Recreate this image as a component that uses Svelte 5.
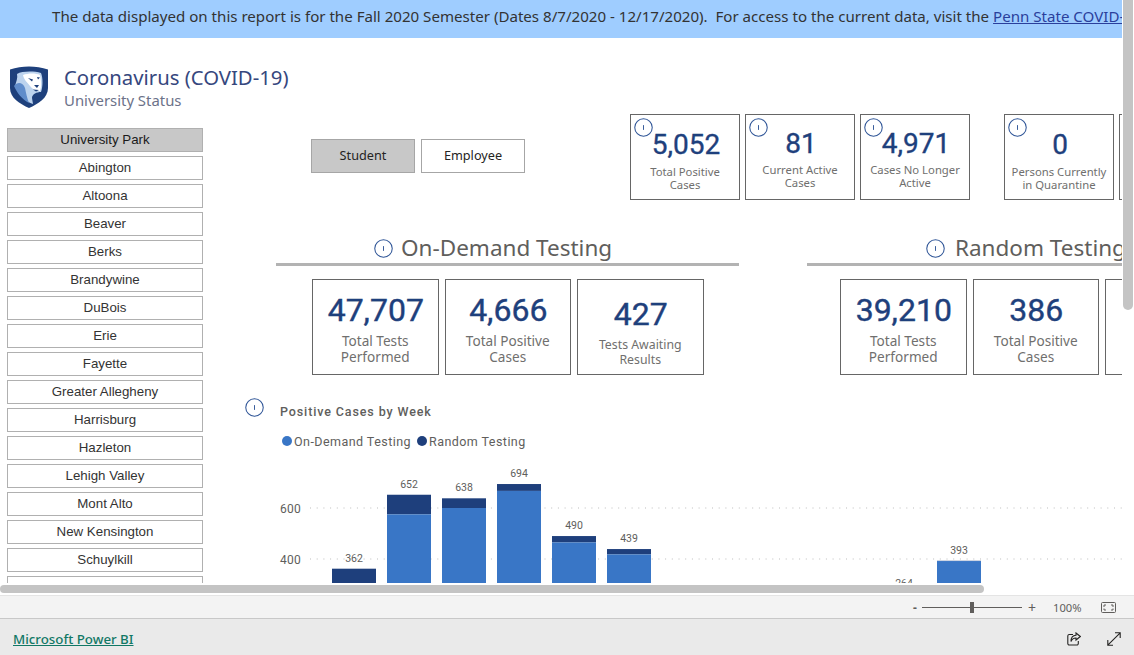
<script>
  const campuses = ['University Park', 'Abington', 'Altoona', 'Beaver', 'Berks', 'Brandywine', 'DuBois', 'Erie', 'Fayette', 'Greater Allegheny', 'Harrisburg', 'Hazleton', 'Lehigh Valley', 'Mont Alto', 'New Kensington', 'Schuylkill', 'Shenango']

  const kpis = [
    { value: '5,052', label: ['Total Positive', 'Cases'] },
    { value: '81', label: ['Current Active', 'Cases'], tight: true },
    { value: '4,971', label: ['Cases No Longer', 'Active'], tight: true },
    { value: '0', label: ['Persons Currently', 'in Quarantine'], gap: true },
    { value: '', label: [] }
  ]

  const onDemand = [
    { value: '47,707', label: ['Total Tests', 'Performed'] },
    { value: '4,666', label: ['Total Positive', 'Cases'] },
    { value: '427', label: ['Tests Awaiting', 'Results'], small: true }
  ]

  const random = [
    { value: '39,210', label: ['Total Tests', 'Performed'] },
    { value: '386', label: ['Total Positive', 'Cases'] },
    { value: '', label: [] }
  ]

  // total per week, demand = on-demand part of it
  const weeks = [
    { total: 362, demand: 280 },
    { total: 652, demand: 575 },
    { total: 638, demand: 600 },
    { total: 694, demand: 667 },
    { total: 490, demand: 465 },
    { total: 439, demand: 418 },
    { total: 180, demand: 150 },
    { total: 120, demand: 100 },
    { total: 90, demand: 70 },
    { total: 110, demand: 90 },
    { total: 264, demand: 240 },
    { total: 393, demand: 392 }
  ]

  const y = (v) => 49 + (600 - v) * 0.255
  const barX = (i) => 87 + i * 55
</script>

{#snippet info(size = 19)}
  <svg class="info" width={size} height={size} viewBox="0 0 20 20">
    <circle cx="10" cy="10" r="9.2" fill="#fff" stroke="#2f5597" stroke-width="1.1" />
    <path d="M10 7.500v5" stroke="#2f5597" stroke-width="1" />
  </svg>
{/snippet}

<div class="app">
  <div class="report">
    <div class="viewport">
      <div class="canvas">
        <div class="banner">
          The data displayed on this report is for the Fall 2020 Semester (Dates 8/7/2020 - 12/17/2020).&nbsp; For access to the current data, visit the <a href="#top">Penn State COVID-19 Dashboard</a>
        </div>

        <header class="head">
          <svg class="logo" width="38" height="42" viewBox="0 0 38 42">
            <path d="M0 3.500C12 -.5 26 -.5 38 3.500V22C38 32 28 38 19 42C10 38 0 32 0 22Z" fill="#1e407c" />
            <path d="M7 8C12 5 24 5 31 7C33 12 33 20 31 26C27 26 22 28 22 32L23 38C16 36 8 28 5 20C6 16 8 12 7 8Z" fill="#bcd3ee" />
            <path d="M4 20C8 15 13 17 15 22C16 27 17 32 19 37C12 33 7 27 4 20Z" fill="#5f8ccb" />
            <path d="M13 9C18 7 26 7 30 9C31 14 32 20 30 25C26 25 22 23 20 20C17 16 14 14 13 9Z" fill="#fff" />
            <path d="M18 12l5 1.500-1 2zM27 11l3 .5-2 2zM24 19l5 0-2 3zM23 23.500l6 .5-3 1.500z" fill="#1e407c" />
          </svg>
          <div>
            <h1>Coronavirus (COVID-19)</h1>
            <p>University Status</p>
          </div>
        </header>

        <div class="body">
          <nav class="campuses">
            {#each campuses as campus, i}
              <button class:on={i === 0}>{campus}</button>
            {/each}
          </nav>

          <main>
            <div class="toprow">
              <div class="toggle">
                <button class="on">Student</button>
                <button>Employee</button>
              </div>
              <div class="kpis">
                {#each kpis as kpi}
                  <div class="kpi" class:gap={kpi.gap} class:tight={kpi.tight}>
                    <span class="kpi-info">{@render info()}</span>
                    <b>{kpi.value}</b>
                    <span class="label">{kpi.label[0]}<br />{kpi.label[1]}</span>
                  </div>
                {/each}
              </div>
            </div>

            <div class="sections">
              <section>
                <h2 class="demand">{@render info()}On-Demand Testing</h2>
                <div class="cards demand-cards">
                  {#each onDemand as card}
                    <div class="card" class:small={card.small}>
                      <b>{card.value}</b>
                      <span class="label">{card.label[0]}<br />{card.label[1]}</span>
                    </div>
                  {/each}
                </div>
              </section>
              <section>
                <h2 class="rand">{@render info()}Random Testing</h2>
                <div class="cards rand-cards">
                  {#each random as card}
                    <div class="card">
                      <b>{card.value}</b>
                      <span class="label">{card.label[0]}<br />{card.label[1]}</span>
                    </div>
                  {/each}
                </div>
              </section>
            </div>

            <div class="chart">
              <div class="chart-title">
                <span class="chart-info">{@render info()}</span>
                <h3>Positive Cases by Week</h3>
              </div>
              <div class="legend">
                <i class="dot light"></i>On-Demand Testing
                <i class="dot dark"></i>Random Testing
              </div>
              <svg class="plot" width="1200" height="160" viewBox="0 0 1200 160">
                <text class="axis" x="35" y="54">600</text>
                <text class="axis" x="35" y="105">400</text>
                <line class="grid" x1="65" x2="1200" y1="49" y2="49" />
                <line class="grid" x1="65" x2="1200" y1="100" y2="100" />
                {#each weeks as w, i}
                  <rect x={barX(i)} y={y(w.total)} width="44" height={y(w.demand) - y(w.total)} fill="#1e3f7c" />
                  <rect x={barX(i)} y={y(w.demand)} width="44" height="160" fill="#3976c6" />
                  <text class="val" x={barX(i) + 22} y={y(w.total) - 7}>{w.total}</text>
                {/each}
              </svg>
            </div>
          </main>
        </div>
      </div>
    </div>

    <div class="vbar"></div>
    <div class="hbar"></div>
  </div>

  <div class="zoombar">
    <span class="minus">-</span>
    <span class="slider"><i></i></span>
    <span class="plus">+</span>
    <span class="pct">100%</span>
    <svg width="15" height="11" viewBox="0 0 15 11" fill="none" stroke="#605e5c">
      <rect x=".5" y=".5" width="14" height="10" rx="1" />
      <path d="M3 5V3h2M10 3h2v2M12 6.500V8h-2M5 8H3V6.500" />
    </svg>
  </div>

  <footer>
    <a href="#top">Microsoft Power BI</a>
    <span class="actions">
      <svg width="14" height="14" viewBox="0 0 14 14" fill="none" stroke="#252423" stroke-width="1.1">
        <path d="M6 2.500H2A1.500 1.500 0 0 0 .8 4v7.500A1.500 1.500 0 0 0 2.300 13h7.500a1.500 1.500 0 0 0 1.500-1.500V9" />
        <path d="M9 1l4.300 3.500L9 8V6C6.500 6 5 7 4 9.500C4 6 6 3.500 9 3.300Z" />
      </svg>
      <svg width="14" height="14" viewBox="0 0 14 14" fill="none" stroke="#252423" stroke-width="1.1">
        <path d="M.8 13.200L13.200 .8M8 .8h5.200V6M.8 8v5.200H6" />
      </svg>
    </span>
  </footer>
</div>

<style>
  :global(body) {
    margin: 0;
    background: #fff;
  }

  .app {
    width: 1134px;
    height: 655px;
    display: flex;
    flex-direction: column;
    overflow: hidden;
    font-family: 'Noto Sans', 'Open Sans', sans-serif;
  }

  .report {
    position: relative;
    height: 595px;
    flex: none;
  }

  .viewport {
    width: 1122px;
    height: 583px;
    overflow: hidden;
  }

  .canvas {
    width: 1400px;
  }

  .vbar {
    position: absolute;
    left: 1123px;
    top: 0;
    width: 10px;
    height: 310px;
    background: #c4c4c4;
    border-radius: 0 0 5px 5px;
  }

  .hbar {
    position: absolute;
    left: 0;
    top: 585px;
    width: 984px;
    height: 8px;
    background: #c4c4c4;
    border-radius: 4px;
  }

  .banner {
    height: 38px;
    box-sizing: border-box;
    padding-left: 52px;
    background: #9fcdff;
    color: #333;
    font-size: 15.1px;
    line-height: 33px;
    white-space: nowrap;
  }

  .banner a {
    color: #2a3f9c;
  }

  .head {
    height: 76px;
    display: flex;
    gap: 16px;
    padding: 27px 0 0 10px;
    box-sizing: border-box;
  }

  .logo {
    margin-top: 1px;
  }

  h1 {
    margin: 0;
    font-size: 20.3px;
    font-weight: 400;
    line-height: 24px;
    color: #36477e;
  }

  .head p {
    margin: 0;
    font-size: 14.9px;
    line-height: 22px;
    color: #6c7289;
  }

  .body {
    display: flex;
  }

  .campuses {
    width: 196px;
    margin: 14px 0 0 7px;
    flex: none;
    display: flex;
    flex-direction: column;
    gap: 4px;
  }

  .campuses button {
    height: 24px;
    padding: 0;
    border: 1px solid #b0b0b0;
    background: #fff;
    color: #333;
    font: 13.3px/22px 'Liberation Sans', Arial, sans-serif;
  }

  .campuses button.on {
    background: #c8c8c8;
    color: #1a1a1a;
  }

  main {
    flex: 1;
  }

  .toprow {
    display: flex;
    height: 86px;
  }

  .toggle {
    display: flex;
    gap: 6px;
    margin: 25px 0 0 108px;
  }

  .toggle button {
    width: 104px;
    height: 34px;
    padding: 0 0 2px;
    border: 1px solid #a6a6a6;
    background: #fff;
    color: #252423;
    font: 12.7px 'Noto Sans', sans-serif;
  }

  .toggle button.on {
    background: #c8c8c8;
  }

  .kpis {
    display: flex;
    gap: 5px;
    margin-left: 105px;
    flex: none;
  }

  .kpi {
    position: relative;
    width: 110px;
    height: 86px;
    box-sizing: border-box;
    border: 1px solid #666;
    display: flex;
    flex-direction: column;
    align-items: center;
    padding-top: 12px;
  }

  .kpi.tight {
    padding-top: 11px;
  }

  .kpi.tight .label {
    margin-top: 1px;
  }

  .kpi.gap {
    margin-left: 29px;
  }

  .kpi b {
    font: 400 28px/36px Roboto, sans-serif;
    -webkit-text-stroke: .35px #1e407c;
    color: #1e407c;
    height: 36px;
    padding-left: 2px;
  }

  .kpi-info {
    position: absolute;
    left: 3px;
    top: 3px;
  }

  .info {
    display: block;
    flex: none;
  }

  .label {
    text-align: center;
    color: #706f6e;
    font-size: 11.3px;
    line-height: 13px;
    margin-top: 2px;
  }

  .sections {
    display: flex;
    gap: 68px;
    margin-left: 73px;
    width: 1200px;
  }

  section {
    width: 463px;
    flex: none;
  }

  section + section {
    width: 500px;
  }

  h2 {
    margin: 0;
    height: 66px;
    box-sizing: border-box;
    border-bottom: 3px solid #b3b3b3;
    display: flex;
    align-items: flex-end;
    gap: 8px;
    font-size: 22.5px;
    font-weight: 400;
    line-height: 30px;
    color: #605e5c;
  }

  h2 .info {
    margin-bottom: 5px;
  }

  h2.demand {
    padding-left: 98px;
  }

  h2.rand {
    padding-left: 119px;
    gap: 10px;
  }

  .cards {
    display: flex;
    gap: 6px;
    margin-top: 13px;
  }

  .demand-cards {
    margin-left: 36px;
  }

  .rand-cards {
    margin-left: 33px;
  }

  .card {
    width: 126.5px;
    height: 96px;
    box-sizing: border-box;
    border: 1px solid #666;
    display: flex;
    flex-direction: column;
    align-items: center;
    padding-top: 10px;
  }

  .card b {
    height: 40px;
    font: 400 32px/40px Roboto, sans-serif;
    -webkit-text-stroke: .4px #1e407c;
    color: #1e407c;
    padding-left: 1px;
  }

  .card .label {
    font-size: 13.6px;
    line-height: 16px;
    margin-top: 3px;
  }

  .card.small {
    padding-top: 14px;
  }

  .card.small .label {
    font-size: 12.3px;
    line-height: 15px;
  }

  .chart {
    margin: 23px 0 0 42px;
  }

  .chart-title {
    display: flex;
    align-items: center;
    height: 20px;
    gap: 16px;
  }

  .chart-info {
    margin-top: -1px;
  }

  h3 {
    margin: 6px 0 0;
    font: 500 12.5px Roboto, sans-serif;
    letter-spacing: .88px;
    color: #605e5c;
  }

  .legend {
    display: flex;
    align-items: center;
    height: 18px;
    margin: 14px 0 0 37px;
    font: 400 12.5px Roboto, sans-serif;
    letter-spacing: .45px;
    color: #605e5c;
  }

  .dot {
    width: 10px;
    height: 10px;
    border-radius: 50%;
    margin-right: 2px;
  }

  .dot.light {
    background: #3976c6;
  }

  .dot.dark {
    background: #1e3f7c;
    margin-left: 6px;
  }

  .plot {
    display: block;
    margin-top: 9px;
  }

  .axis {
    font: 12px Roboto, sans-serif;
    fill: #605e5c;
    text-anchor: start;
    letter-spacing: .3px;
  }

  .grid {
    stroke: #bdbdbd;
    stroke-width: 1;
    stroke-dasharray: 1 5.700;
  }

  .val {
    font: 10.5px Roboto, sans-serif;
    fill: #605e5c;
    text-anchor: middle;
  }

  .zoombar {
    height: 23px;
    flex: none;
    box-sizing: border-box;
    border-top: 1px solid #e4e4e4;
    background: #f3f3f3;
    display: flex;
    align-items: center;
    color: #605e5c;
    font-size: 12px;
  }

  .minus {
    margin-left: 913px;
    width: 9px;
    font-weight: 700;
  }

  .slider {
    position: relative;
    width: 100px;
    height: 1px;
    background: #605e5c;
  }

  .slider i {
    position: absolute;
    left: 48px;
    top: -5px;
    width: 4px;
    height: 11px;
    background: #605e5c;
  }

  .plus {
    margin-left: 6px;
    font-size: 14px;
  }

  .pct {
    margin-left: 17px;
    width: 48px;
    font-size: 11.2px;
  }

  footer {
    flex: 1;
    border-top: 1px solid #c8c8c8;
    background: #eaeaea;
    display: flex;
    align-items: center;
    justify-content: space-between;
    padding: 3px 13px 0;
  }

  footer a {
    color: #117865;
    font-size: 13.3px;
    font-weight: 500;
  }

  .actions {
    display: flex;
    gap: 26px;
  }

  .actions svg {
    display: block;
  }
</style>
